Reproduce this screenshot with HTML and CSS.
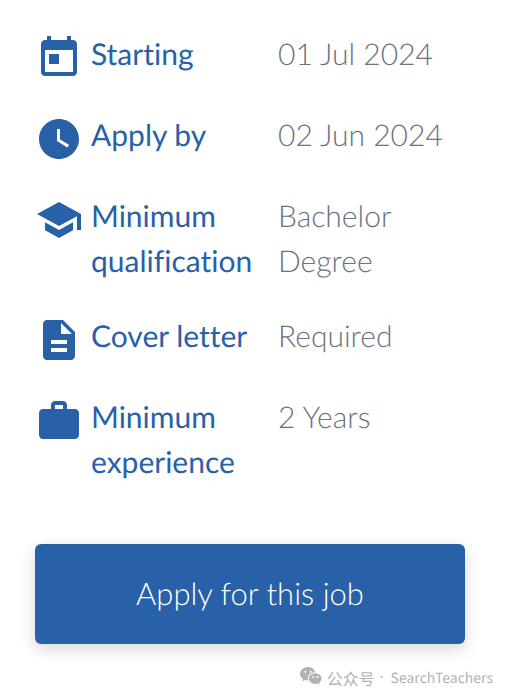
FILE: index.html
```html
<!DOCTYPE html>
<html lang="en">
<head>
  <meta charset="utf-8">
  <meta name="viewport" content="width=device-width, initial-scale=1">
  <title>Job details</title>
  <link rel="stylesheet" href="styles.css">
</head>
<body>
  <main class="container">
    <dl class="details">
      <div class="row">
        <dt>
          <svg class="icon" viewBox="0 0 24 24" aria-hidden="true"><path d="M19 3h-1V1h-2v2H8V1H6v2H5c-1.11 0-1.99.9-1.99 2L3 19c0 1.1.89 2 2 2h14c1.1 0 2-.9 2-2V5c0-1.1-.9-2-2-2zm0 16H5V8h14v11zM7 10h5v5H7z"/></svg>
          <span>Starting</span>
        </dt>
        <dd>01 Jul 2024</dd>
      </div>
      <div class="row">
        <dt>
          <svg class="icon" viewBox="0 0 24 24" aria-hidden="true"><path d="M12 2C6.5 2 2 6.5 2 12s4.5 10 10 10 10-4.5 10-10S17.5 2 12 2zm4.2 14.2L11 13V7h1.5v5.2l4.5 2.7-.8 1.3z"/></svg>
          <span>Apply by</span>
        </dt>
        <dd>02 Jun 2024</dd>
      </div>
      <div class="row">
        <dt>
          <svg class="icon" viewBox="0 0 24 24" aria-hidden="true"><path d="M5 13.18v4L12 21l7-3.82v-4L12 17l-7-3.82zM12 3L1 9l11 6 9-4.91V17h2V9L12 3z"/></svg>
          <span>Minimum qualification</span>
        </dt>
        <dd>Bachelor Degree</dd>
      </div>
      <div class="row">
        <dt>
          <svg class="icon" viewBox="0 0 24 24" aria-hidden="true"><path d="M14 2H6c-1.1 0-1.99.9-1.99 2L4 20c0 1.1.89 2 1.99 2H18c1.1 0 2-.9 2-2V8l-6-6zm2 16H8v-2h8v2zm0-4H8v-2h8v2zm-3-5V3.5L18.5 9H13z"/></svg>
          <span>Cover letter</span>
        </dt>
        <dd>Required</dd>
      </div>
      <div class="row">
        <dt>
          <svg class="icon" viewBox="0 0 24 24" aria-hidden="true"><path d="M20 6h-4V4c0-1.11-.89-2-2-2h-4c-1.11 0-2 .89-2 2v2H4c-1.11 0-1.99.89-1.99 2L2 19c0 1.11.89 2 2 2h16c1.11 0 2-.89 2-2V8c0-1.11-.89-2-2-2zm-6 0h-4V4h4v2z"/></svg>
          <span>Minimum experience</span>
        </dt>
        <dd>2 Years</dd>
      </div>
    </dl>
    <button type="button" class="apply">Apply for this job</button>
  </main>

  <footer class="source">
    <svg class="wechat" viewBox="0 0 22 18" aria-hidden="true">
      <path d="M8 0C3.500 0 0 3 0 6.800c0 2.200 1.200 4 3 5.200L2.300 14.400l2.700-1.400c1 .3 2 .5 3.100.5A6 6 0 0 1 8 11.600C8 8 11.200 5.300 15.200 5.300C14.600 2.200 11.600 0 8 0z"/>
      <path d="M15.300 6.200c-3.600 0-6.400 2.400-6.400 5.400s2.800 5.400 6.400 5.400c.8 0 1.600-.1 2.300-.4l2.100 1.200-.6-2c1.500-1 2.500-2.500 2.500-4.200c0-3-2.800-5.400-6.300-5.400z"/>
      <g fill="#fff">
        <circle cx="5.300" cy="4.800" r="1"/>
        <circle cx="10.600" cy="4.800" r="1"/>
        <circle cx="13.200" cy="10" r=".9"/>
        <circle cx="17.500" cy="10" r=".9"/>
      </g>
    </svg>
    <span class="channel">公众号</span>
    <span class="dot">·</span>
    <span class="name">SearchTeachers</span>
  </footer>
</body>
</html>
```
FILE: styles.css
```css
body {
  margin: 0;
  background-color: #fff;
  font-family: Lato, sans-serif;
  font-size: 30px;
  line-height: 45px;
  font-variant-ligatures: none;
  text-rendering: geometricPrecision;
}

.container {
  padding: 32px 43px 0 35px;
}

.details {
  display: flex;
  flex-direction: column;
  gap: 30px;
  margin: 0 0 59px;
}

.row {
  display: grid;
  grid-template-columns: 235px 1fr;
  column-gap: 8px;
  min-height: 51px;
}

dt {
  display: flex;
  align-items: flex-start;
  gap: 8px;
  color: #2861a8;
}

dd {
  margin: 0;
  color: #6b7280;
  font-weight: 300;
}

.icon {
  flex: none;
  width: 48px;
  height: 48px;
  margin-top: 2px;
  fill: currentColor;
}

.apply {
  display: block;
  width: 100%;
  padding: 27px 20px 28px;
  background-color: #2861a8;
  color: #fff;
  border: none;
  border-radius: 6px;
  box-shadow: 0 5px 16px rgba(0, 0, 0, 0.16);
  font-family: inherit;
  font-size: 31px;
  font-weight: 300;
  line-height: 45px;
  text-rendering: inherit;
  cursor: pointer;
}

.source {
  display: flex;
  justify-content: flex-end;
  align-items: center;
  gap: 5px;
  padding: 22px 15px 0 0;
  color: #b2b2b2;
  font-family: "Noto Sans CJK SC", sans-serif;
  font-size: 14px;
  line-height: 24px;
}

.channel {
  font-size: 16px;
}

.dot {
  font-family: "Noto Sans", sans-serif;
  margin-right: 2px;
}

.wechat {
  width: 22px;
  height: 18px;
  margin-bottom: 4px;
  fill: currentColor;
}
```
